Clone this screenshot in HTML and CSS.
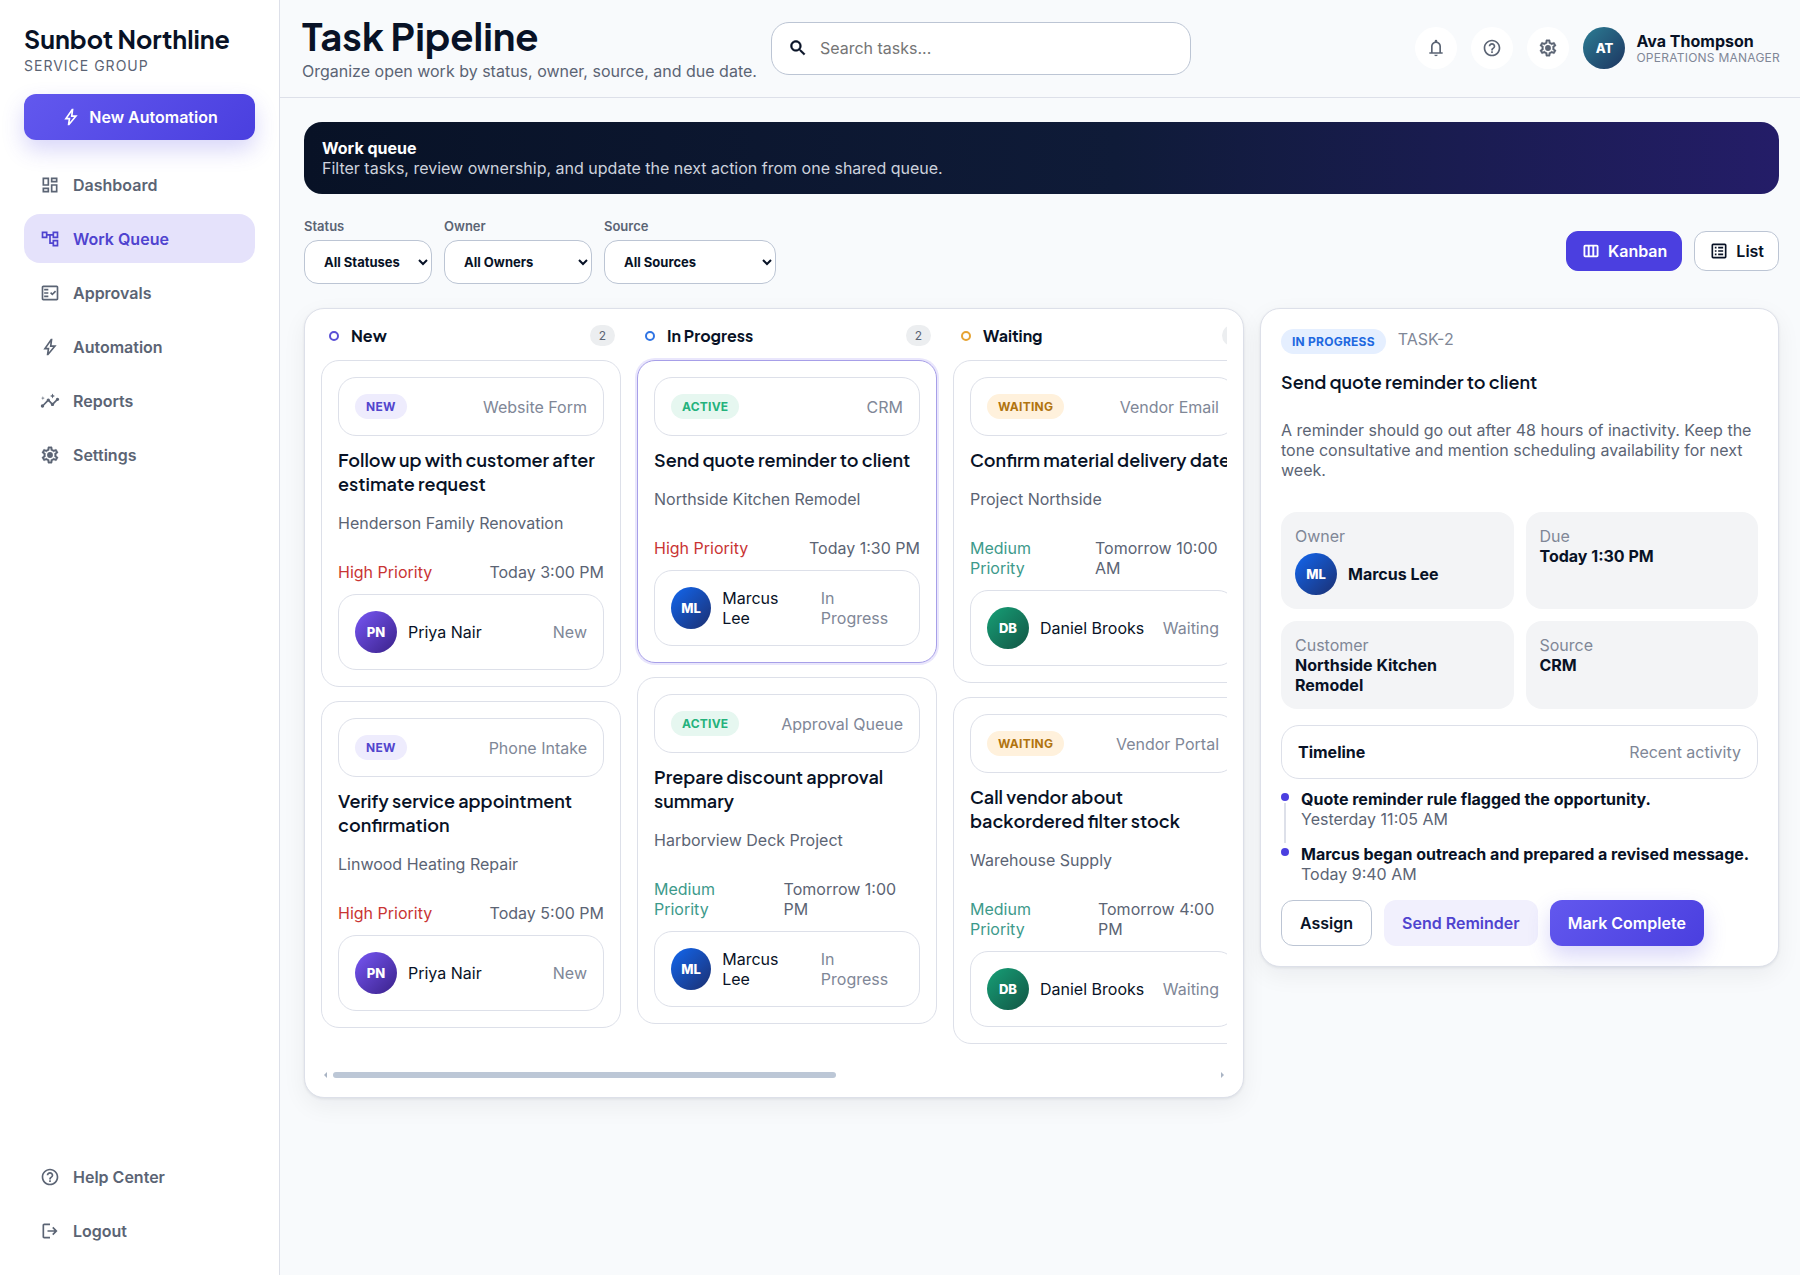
FILE: index.html
```html
<!DOCTYPE html>
<html lang="en">
<head>
    <meta charset="UTF-8">
    <meta name="viewport" content="width=device-width, initial-scale=1.0">
    <title>Task Pipeline - Sunbot Northline</title>
    <link rel="stylesheet" href="styles.css">
</head>
<body>
    <svg class="sprite" aria-hidden="true">
        <symbol id="i-bolt" viewBox="0 0 24 24"><path d="m10.55 18.2 5.175-6.2h-4l.725-5.675L7.825 13H11.3l-.75 5.2ZM8 22l1-7H4L13 2h2l-1 8h6L10 22H8Z"/></symbol>
        <symbol id="i-dashboard" viewBox="0 0 24 24"><path d="M19 5v2h-4V5h4M9 5v6H5V5h4m10 8v6h-4v-6h4M9 17v2H5v-2h4M21 3h-8v6h8V3zM11 3H3v10h8V3zm10 8h-8v10h8V11zm-10 4H3v6h8v-6z"/></symbol>
        <symbol id="i-tree" viewBox="0 0 24 24"><path d="M22 11V3h-7v3H9V3H2v8h7V8h2v10h4v3h7v-8h-7v3h-2V8h2v3h7zM7 9H4V5h3v4zm10 6h3v4h-3v-4zm0-10h3v4h-3V5z"/></symbol>
        <symbol id="i-check" viewBox="0 0 24 24"><path d="M20 3H4c-1.1 0-2 .9-2 2v14c0 1.1.9 2 2 2h16c1.1 0 2-.9 2-2V5c0-1.1-.9-2-2-2zm0 16H4V5h16v14z"/><path d="M19.41 10.42 17.99 9l-3.17 3.17-1.41-1.42L12 12.16 14.82 15zM5 7h5v2H5zm0 4h5v2H5zm0 4h5v2H5z"/></symbol>
        <symbol id="i-insights" viewBox="0 0 24 24"><path d="M21 8c-1.45 0-2.26 1.44-1.93 2.51l-3.55 3.56c-.3-.09-.74-.09-1.04 0l-2.55-2.55C12.27 10.45 11.46 9 10 9c-1.45 0-2.27 1.44-1.93 2.52l-4.56 4.55C2.44 15.74 1 16.55 1 18c0 1.1.9 2 2 2 1.45 0 2.26-1.44 1.93-2.51l4.55-4.56c.3.09.74.09 1.04 0l2.55 2.55C12.73 16.55 13.54 18 15 18c1.45 0 2.27-1.44 1.93-2.52l3.56-3.55c1.07.33 2.51-.48 2.51-1.93 0-1.1-.9-2-2-2z"/><path d="m15 9 .94-2.07L18 6l-2.06-.93L15 3l-.92 2.07L12 6l2.08.93zM3.5 11 4 9l2-.5L4 8l-.5-2L3 8l-2 .5L3 9z"/></symbol>
        <symbol id="i-settings" viewBox="0 0 24 24"><path stroke="currentColor" stroke-width=".4" d="M19.43 12.98c.04-.32.07-.64.07-.98 0-.34-.03-.66-.07-.98l2.11-1.65c.19-.15.24-.42.12-.64l-2-3.46c-.09-.16-.26-.25-.44-.25-.06 0-.12.01-.17.03l-2.49 1c-.52-.4-1.08-.73-1.69-.98l-.38-2.65C14.46 2.18 14.25 2 14 2h-4c-.25 0-.46.18-.49.42l-.38 2.65c-.61.25-1.17.59-1.69.98l-2.49-1c-.06-.02-.12-.03-.18-.03-.17 0-.34.09-.43.25l-2 3.46c-.13.22-.07.49.12.64l2.11 1.65c-.04.32-.07.65-.07.98 0 .33.03.66.07.98l-2.11 1.65c-.19.15-.24.42-.12.64l2 3.46c.09.16.26.25.44.25.06 0 .12-.01.17-.03l2.49-1c.52.4 1.08.73 1.69.98l.38 2.65c.03.24.24.42.49.42h4c.25 0 .46-.18.49-.42l.38-2.65c.61-.25 1.17-.59 1.69-.98l2.49 1c.06.02.12.03.18.03.17 0 .34-.09.43-.25l2-3.46c.12-.22.07-.49-.12-.64l-2.11-1.65zm-1.98-1.71c.04.31.05.52.05.73 0 .21-.02.43-.05.73l-.14 1.13.89.7 1.08.84-.7 1.21-1.27-.51-1.04-.42-.9.68c-.43.32-.84.56-1.25.73l-1.06.43-.16 1.13-.2 1.35h-1.4l-.19-1.35-.16-1.13-1.06-.43c-.43-.18-.83-.41-1.23-.71l-.91-.7-1.06.43-1.27.51-.7-1.21 1.08-.84.89-.7-.14-1.13c-.03-.31-.05-.54-.05-.74s.02-.43.05-.73l.14-1.13-.89-.7-1.08-.84.7-1.21 1.27.51 1.04.42.9-.68c.43-.32.84-.56 1.25-.73l1.06-.43.16-1.13.2-1.35h1.39l.19 1.35.16 1.13 1.06.43c.43.18.83.41 1.23.71l.91.7 1.06-.43 1.27-.51.7 1.21-1.07.85-.89.7.14 1.13z"/><circle cx="12" cy="12" r="3.5"/></symbol>
        <symbol id="i-help" viewBox="0 0 24 24"><path d="M11 18h2v-2h-2v2zm1-16C6.48 2 2 6.48 2 12s4.48 10 10 10 10-4.48 10-10S17.52 2 12 2zm0 18c-4.41 0-8-3.59-8-8s3.59-8 8-8 8 3.59 8 8-3.59 8-8 8zm0-14c-2.21 0-4 1.79-4 4h2c0-1.1.9-2 2-2s2 .9 2 2c0 2-3 1.75-3 5h2c0-2.25 3-2.5 3-5 0-2.21-1.79-4-4-4z"/></symbol>
        <symbol id="i-logout" viewBox="0 0 24 24"><path d="M5 21q-.825 0-1.412-.587T3 19V5q0-.825.588-1.412T5 3h7v2H5v14h7v2zm11-4-1.375-1.45 2.55-2.55H9v-2h8.175l-2.55-2.55L16 7l5 5z"/></symbol>
        <symbol id="i-bell" viewBox="0 0 24 24"><path d="M4 19v-2h2v-7q0-2.075 1.25-3.687T10.5 4.2v-.7q0-.625.438-1.062T12 2t1.063.438T13.5 3.5v.7q2 .5 3.25 2.113T18 10v7h2v2zm8 3q-.825 0-1.412-.587T10 20h4q0 .825-.587 1.413T12 22m-4-5h8v-7q0-1.65-1.175-2.825T12 6T9.175 7.175T8 10z"/></symbol>
        <symbol id="i-search" viewBox="0 0 24 24"><path stroke="currentColor" stroke-width=".6" d="M15.5 14h-.79l-.28-.27C15.41 12.59 16 11.11 16 9.5 16 5.91 13.09 3 9.5 3S3 5.91 3 9.5 5.91 16 9.5 16c1.61 0 3.09-.59 4.23-1.57l.27.28v.79l5 4.99L20.49 19l-4.99-5zm-6 0C7.01 14 5 11.99 5 9.5S7.01 5 9.5 5 14 7.01 14 9.5 11.99 14 9.5 14z"/></symbol>
        <symbol id="i-columns" viewBox="0 0 24 24"><path fill-rule="evenodd" d="M5 4.5h14a2 2 0 0 1 2 2v11a2 2 0 0 1-2 2H5a2 2 0 0 1-2-2v-11a2 2 0 0 1 2-2zm.2 2.2v10.6h2.9V6.700zm5.200 0v10.600h3.200V6.700zm5.500 0v10.600h2.900V6.700z"/></symbol>
        <symbol id="i-list" viewBox="0 0 24 24"><path fill-rule="evenodd" d="M5 3h14a2 2 0 0 1 2 2v14a2 2 0 0 1-2 2H5a2 2 0 0 1-2-2V5a2 2 0 0 1 2-2zm0 2v14h14V5zm2 2h2v2H7zm4 0h6v2h-6zm-4 4h2v2H7zm4 0h6v2h-6zm-4 4h2v2H7zm4 0h6v2h-6z"/></symbol>
    </svg>

    <div class="app">
        <aside class="sidebar">
            <div class="brand">
                <div class="brand-name">Sunbot Northline</div>
                <div class="brand-sub">SERVICE GROUP</div>
            </div>
            <button class="btn btn-primary" type="button"><svg class="icon"><use href="#i-bolt"/></svg>New Automation</button>
            <nav class="nav">
                <a class="nav-item" href="#"><svg class="icon"><use href="#i-dashboard"/></svg>Dashboard</a>
                <a class="nav-item active" href="#"><svg class="icon"><use href="#i-tree"/></svg>Work Queue</a>
                <a class="nav-item" href="#"><svg class="icon"><use href="#i-check"/></svg>Approvals</a>
                <a class="nav-item" href="#"><svg class="icon"><use href="#i-bolt"/></svg>Automation</a>
                <a class="nav-item" href="#"><svg class="icon"><use href="#i-insights"/></svg>Reports</a>
                <a class="nav-item" href="#"><svg class="icon"><use href="#i-settings"/></svg>Settings</a>
            </nav>
            <nav class="nav nav-bottom">
                <a class="nav-item" href="#"><svg class="icon"><use href="#i-help"/></svg>Help Center</a>
                <a class="nav-item" href="#"><svg class="icon"><use href="#i-logout"/></svg>Logout</a>
            </nav>
        </aside>

        <div class="main">
            <header class="topbar">
                <div class="page-head">
                    <h1>Task Pipeline</h1>
                    <p>Organize open work by status, owner, source, and due date.</p>
                </div>
                <label class="search">
                    <svg class="icon"><use href="#i-search"/></svg>
                    <input type="search" placeholder="Search tasks..." aria-label="Search tasks">
                </label>
                <div class="top-actions">
                    <button class="icon-btn" type="button" aria-label="Notifications"><svg class="icon"><use href="#i-bell"/></svg></button>
                    <button class="icon-btn" type="button" aria-label="Help"><svg class="icon"><use href="#i-help"/></svg></button>
                    <button class="icon-btn" type="button" aria-label="Settings"><svg class="icon"><use href="#i-settings"/></svg></button>
                    <div class="person">
                        <span class="avatar avatar-at">AT</span>
                        <div class="user">
                            <strong>Ava Thompson</strong>
                            <span>OPERATIONS MANAGER</span>
                        </div>
                    </div>
                </div>
            </header>

            <main class="content">
                <section class="banner">
                    <strong>Work queue</strong>
                    <p>Filter tasks, review ownership, and update the next action from one shared queue.</p>
                </section>

                <div class="toolbar">
                    <div class="filters">
                        <div class="field field-status">
                            <label for="f-status">Status</label>
                            <select id="f-status"><option>All Statuses</option></select>
                        </div>
                        <div class="field field-owner">
                            <label for="f-owner">Owner</label>
                            <select id="f-owner"><option>All Owners</option></select>
                        </div>
                        <div class="field field-source">
                            <label for="f-source">Source</label>
                            <select id="f-source"><option>All Sources</option></select>
                        </div>
                    </div>
                    <div class="views">
                        <button class="view-btn active" type="button"><svg class="icon"><use href="#i-columns"/></svg>Kanban</button>
                        <button class="view-btn" type="button"><svg class="icon"><use href="#i-list"/></svg>List</button>
                    </div>
                </div>

                <div class="workspace">
                    <section class="panel board">
                        <div class="columns">
                            <div class="column">
                                <div class="column-head"><span class="ring ring-new"></span><h2>New</h2><span class="count">2</span></div>
                                <article class="card">
                                    <div class="box"><span class="badge badge-new">NEW</span><span class="muted">Website Form</span></div>
                                    <h3>Follow up with customer after estimate request</h3>
                                    <p>Henderson Family Renovation</p>
                                    <div class="meta"><span class="high">High Priority</span><span>Today 3:00 PM</span></div>
                                    <div class="box"><div class="person"><span class="avatar avatar-pn">PN</span><span>Priya Nair</span></div><span class="muted">New</span></div>
                                </article>
                                <article class="card">
                                    <div class="box"><span class="badge badge-new">NEW</span><span class="muted">Phone Intake</span></div>
                                    <h3>Verify service appointment confirmation</h3>
                                    <p>Linwood Heating Repair</p>
                                    <div class="meta"><span class="high">High Priority</span><span>Today 5:00 PM</span></div>
                                    <div class="box"><div class="person"><span class="avatar avatar-pn">PN</span><span>Priya Nair</span></div><span class="muted">New</span></div>
                                </article>
                            </div>

                            <div class="column">
                                <div class="column-head"><span class="ring ring-progress"></span><h2>In Progress</h2><span class="count">2</span></div>
                                <article class="card selected">
                                    <div class="box"><span class="badge badge-active">ACTIVE</span><span class="muted">CRM</span></div>
                                    <h3>Send quote reminder to client</h3>
                                    <p>Northside Kitchen Remodel</p>
                                    <div class="meta"><span class="high">High Priority</span><span>Today 1:30 PM</span></div>
                                    <div class="box"><div class="person"><span class="avatar avatar-ml">ML</span><span>Marcus Lee</span></div><span class="muted">In Progress</span></div>
                                </article>
                                <article class="card">
                                    <div class="box"><span class="badge badge-active">ACTIVE</span><span class="muted">Approval Queue</span></div>
                                    <h3>Prepare discount approval summary</h3>
                                    <p>Harborview Deck Project</p>
                                    <div class="meta"><span class="medium">Medium Priority</span><span>Tomorrow 1:00 PM</span></div>
                                    <div class="box"><div class="person"><span class="avatar avatar-ml">ML</span><span>Marcus Lee</span></div><span class="muted">In Progress</span></div>
                                </article>
                            </div>

                            <div class="column">
                                <div class="column-head"><span class="ring ring-waiting"></span><h2>Waiting</h2><span class="count">2</span></div>
                                <article class="card">
                                    <div class="box"><span class="badge badge-waiting">WAITING</span><span class="muted">Vendor Email</span></div>
                                    <h3>Confirm material delivery date</h3>
                                    <p>Project Northside</p>
                                    <div class="meta"><span class="medium">Medium Priority</span><span>Tomorrow 10:00 AM</span></div>
                                    <div class="box"><div class="person"><span class="avatar avatar-db">DB</span><span>Daniel Brooks</span></div><span class="muted">Waiting</span></div>
                                </article>
                                <article class="card">
                                    <div class="box"><span class="badge badge-waiting">WAITING</span><span class="muted">Vendor Portal</span></div>
                                    <h3>Call vendor about backordered filter stock</h3>
                                    <p>Warehouse Supply</p>
                                    <div class="meta"><span class="medium">Medium Priority</span><span>Tomorrow 4:00 PM</span></div>
                                    <div class="box"><div class="person"><span class="avatar avatar-db">DB</span><span>Daniel Brooks</span></div><span class="muted">Waiting</span></div>
                                </article>
                            </div>
                        </div>
                        <div class="scrollbar" aria-hidden="true">
                            <span class="arrow arrow-left"></span>
                            <div class="track"><div class="thumb"></div></div>
                            <span class="arrow arrow-right"></span>
                        </div>
                    </section>

                    <section class="panel detail">
                        <div class="detail-top"><span class="badge badge-progress">IN PROGRESS</span><span class="muted">TASK-2</span></div>
                        <h3>Send quote reminder to client</h3>
                        <p class="detail-text">A reminder should go out after 48 hours of inactivity. Keep the tone consultative and mention scheduling availability for next week.</p>
                        <div class="facts">
                            <div class="fact">
                                <span class="muted">Owner</span>
                                <div class="person"><span class="avatar avatar-ml">ML</span><strong>Marcus Lee</strong></div>
                            </div>
                            <div class="fact"><span class="muted">Due</span><strong>Today 1:30 PM</strong></div>
                            <div class="fact"><span class="muted">Customer</span><strong>Northside Kitchen Remodel</strong></div>
                            <div class="fact"><span class="muted">Source</span><strong>CRM</strong></div>
                        </div>
                        <div class="box"><strong>Timeline</strong><span class="muted">Recent activity</span></div>
                        <ul class="timeline">
                            <li><span class="dot"></span><div><strong>Quote reminder rule flagged the opportunity.</strong><span>Yesterday 11:05 AM</span></div></li>
                            <li><span class="dot"></span><div><strong>Marcus began outreach and prepared a revised message.</strong><span>Today 9:40 AM</span></div></li>
                        </ul>
                        <div class="detail-actions">
                            <button class="btn btn-outline" type="button">Assign</button>
                            <button class="btn btn-soft" type="button">Send Reminder</button>
                            <button class="btn btn-primary" type="button">Mark Complete</button>
                        </div>
                    </section>
                </div>
            </main>
        </div>
    </div>
</body>
</html>
```
FILE: styles.css
```css
:root {
    --ink: #081226;
    --text: #5b6474;
    --muted: #808797;
    --line: #dde0e9;
    --line-strong: #bcc5d4;
    --primary: #4b3fe0;
    --heading: "Plus Jakarta Sans", Inter, sans-serif;
}
* {
    box-sizing: border-box;
}
body {
    margin: 0;
    font-family: Inter, sans-serif;
    font-size: 16px;
    line-height: 20px;
    color: var(--ink);
    background: #f8fafc;
}
h1, h2, h3, p, ul {
    margin: 0;
    padding: 0;
}
button, input, select {
    font: inherit;
    color: inherit;
}
strong {
    font-weight: 700;
}
.sprite {
    display: none;
}
.icon {
    width: 20px;
    height: 20px;
    fill: currentColor;
    flex-shrink: 0;
}
.muted {
    color: var(--muted);
}
.app {
    display: flex;
    min-height: 100vh;
}

/* Sidebar */
.sidebar {
    display: flex;
    flex-direction: column;
    width: 280px;
    flex-shrink: 0;
    padding: 24px 24px 20px;
    background: #fff;
    border-right: 1px solid var(--line);
}
.brand {
    margin-bottom: 18px;
}
.brand-name {
    margin-bottom: 2px;
    font-family: var(--heading);
    font-size: 25px;
    line-height: 30px;
    font-weight: 700;
}
.brand-sub {
    font-size: 14px;
    letter-spacing: 1px;
    color: var(--text);
}
.nav {
    display: flex;
    flex-direction: column;
    gap: 5px;
    margin-top: 20px;
}
.nav-bottom {
    margin-top: auto;
}
.nav-item {
    display: flex;
    align-items: center;
    gap: 13px;
    height: 49px;
    padding: 0 16px;
    border-radius: 16px;
    font-weight: 600;
    color: var(--text);
    text-decoration: none;
}
.nav-item.active {
    background: #e5e2fb;
    color: #4f43cf;
}

/* Buttons */
.btn {
    display: flex;
    align-items: center;
    justify-content: center;
    gap: 8px;
    height: 46px;
    padding: 0 18px;
    border: 0;
    border-radius: 12px;
    font-weight: 600;
    cursor: pointer;
}
.btn-primary {
    color: #fff;
    background: linear-gradient(135deg, #6258ee, #4a3fdf);
    box-shadow: 0 10px 22px rgba(79, 67, 226, 0.22);
}
.btn-outline {
    background: #fff;
    border: 1px solid var(--line-strong);
}
.btn-soft {
    background: #f1f0fd;
    color: #4f43cf;
}

/* Topbar */
.main {
    flex: 1;
    min-width: 0;
}
.topbar {
    display: flex;
    align-items: center;
    gap: 14px;
    height: 98px;
    padding: 0 20px 1px 22px;
    border-bottom: 1px solid var(--line);
}
.page-head h1 {
    margin-bottom: 4px;
    font-family: var(--heading);
    font-size: 38px;
    line-height: 42px;
    font-weight: 700;
}
.page-head p {
    white-space: nowrap;
    color: var(--text);
}
.search {
    display: flex;
    align-items: center;
    gap: 12px;
    width: 420px;
    height: 53px;
    padding: 0 16px;
    background: #fff;
    border: 1px solid var(--line-strong);
    border-radius: 18px;
}
.search input {
    flex: 1;
    min-width: 0;
    padding: 0;
    border: 0;
    outline: 0;
    background: none;
}
.top-actions {
    display: flex;
    align-items: center;
    gap: 14px;
    margin-left: auto;
}
.icon-btn {
    display: grid;
    place-items: center;
    width: 42px;
    height: 42px;
    padding: 0;
    border: 0;
    border-radius: 50%;
    background: #fff;
    color: var(--text);
}
.person {
    display: flex;
    align-items: center;
    gap: 11px;
}
.user strong, .user span {
    display: block;
}
.user span {
    font-size: 12px;
    line-height: 14px;
    letter-spacing: 0.02em;
    color: var(--muted);
}
.avatar {
    display: grid;
    place-items: center;
    width: 42px;
    height: 42px;
    border-radius: 50%;
    font-size: 13px;
    font-weight: 800;
    color: #fff;
}
.avatar-at { background: linear-gradient(135deg, #2c7d94, #1d3560); }
.avatar-pn { background: linear-gradient(135deg, #7757f5, #3a2189); }
.avatar-ml { background: linear-gradient(135deg, #1267f0, #1c2f70); }
.avatar-db { background: linear-gradient(135deg, #16a077, #135544); }

/* Content */
.content {
    display: flex;
    flex-direction: column;
    gap: 24px;
    padding: 24px 21px 24px 24px;
}
.banner {
    padding: 16px 18px;
    border-radius: 18px;
    color: #fff;
    background: linear-gradient(90deg, #081226, #0f1b38 55%, #241d68);
}
.banner p {
    color: #cdd2dd;
}
.toolbar, .filters, .views {
    display: flex;
    align-items: center;
    gap: 12px;
}
.toolbar {
    justify-content: space-between;
}
.field {
    display: flex;
    flex-direction: column;
    gap: 6px;
}
.field label {
    font-size: 13px;
    line-height: 16px;
    font-weight: 600;
    color: var(--text);
}
.field select {
    height: 44px;
    padding: 0 0 0 15px;
    border: 1px solid var(--line-strong);
    border-radius: 14px;
    background: #fff;
    font-size: 13px;
    font-weight: 700;
}
.field-status { width: 128px; }
.field-owner { width: 148px; }
.field-source { width: 172px; }
.view-btn {
    display: flex;
    align-items: center;
    gap: 7px;
    height: 40px;
    padding: 0 14px;
    border: 1px solid var(--line-strong);
    border-radius: 12px;
    background: #fff;
    font-weight: 600;
}
.view-btn.active {
    border-color: var(--primary);
    background: var(--primary);
    color: #fff;
}
.workspace {
    display: grid;
    grid-template-columns: minmax(0, 1fr) 519px;
    gap: 16px;
    align-items: start;
}
.panel {
    background: #fff;
    border: 1px solid var(--line);
    border-radius: 20px;
    box-shadow: 0 8px 24px rgba(15, 23, 42, 0.06), 0 1px 3px rgba(15, 23, 42, 0.08);
}

/* Board */
.board {
    padding: 16px;
}
.columns {
    display: flex;
    align-items: flex-start;
    gap: 16px;
    overflow-x: auto;
    padding-bottom: 24px;
    scrollbar-width: none;
}
.scrollbar {
    display: flex;
    align-items: center;
    gap: 6px;
    height: 13px;
    padding: 0 3px;
}
.track {
    flex: 1;
}
.thumb {
    width: 57%;
    height: 6px;
    border-radius: 3px;
    background: #bcc7d6;
}
.arrow {
    border: 3px solid transparent;
}
.arrow-left {
    border-left: 0;
    border-right-color: #a9b4c4;
}
.arrow-right {
    border-right: 0;
    border-left-color: #a9b4c4;
}
.column {
    display: flex;
    flex-direction: column;
    gap: 14px;
    flex: 0 0 300px;
}
.column-head {
    display: flex;
    align-items: center;
    gap: 12px;
    height: 21px;
    padding: 0 6px 0 8px;
}
.column-head h2 {
    font-family: var(--heading);
    font-size: 16px;
    font-weight: 700;
}
.ring {
    width: 10px;
    height: 10px;
    border: 2px solid;
    border-radius: 50%;
}
.ring-new { color: #5a4fd6; }
.ring-progress { color: #2f74e4; }
.ring-waiting { color: #e6a332; }
.count {
    margin-left: auto;
    width: 25px;
    border-radius: 12px;
    background: #eceef0;
    color: var(--text);
    font-size: 12px;
    line-height: 21px;
    text-align: center;
}
.card {
    display: flex;
    flex-direction: column;
    gap: 12px;
    padding: 16px;
    border: 1px solid var(--line);
    border-radius: 18px;
    background: #fff;
}
.card.selected {
    border-color: #a79fe8;
    box-shadow: 0 0 0 2px #e9e6fc;
}
.card p {
    margin: 4px 0 16px;
    line-height: 22px;
    color: var(--text);
}
h3 {
    font-family: var(--heading);
    font-size: 18px;
    line-height: 24px;
    font-weight: 600;
}
.box {
    display: flex;
    align-items: center;
    justify-content: space-between;
    gap: 14px;
    padding: 16px;
    border: 1px solid var(--line);
    border-radius: 18px;
}
.badge {
    padding: 0 11px;
    border-radius: 13px;
    font-size: 12px;
    line-height: 25px;
    font-weight: 700;
    letter-spacing: 0.02em;
}
.badge-new { background: #eeecfd; color: #5145cd; }
.badge-active { background: #e6f7f0; color: #24b27c; }
.badge-waiting { background: #fff1dc; color: #b1740f; }
.badge-progress { background: #e5efff; color: #2068e0; }
.meta {
    display: flex;
    justify-content: space-between;
    gap: 14px;
    color: var(--text);
}
.high { color: #c93434; }
.medium { color: #3d9a8b; }

/* Detail */
.detail {
    display: flex;
    flex-direction: column;
    gap: 16px;
    padding: 20px;
}
.detail-top {
    display: flex;
    gap: 12px;
}
.detail-text {
    margin: 10px 0 16px;
    color: var(--text);
}
.facts {
    display: grid;
    grid-template-columns: 1fr 1fr;
    gap: 12px;
}
.fact {
    padding: 14px;
    border-radius: 16px;
    background: #f3f4f6;
}
.fact > .muted, .fact > strong {
    display: block;
}
.fact .person {
    margin-top: 7px;
}
.timeline {
    display: flex;
    flex-direction: column;
    gap: 15px;
    margin-top: -6px;
    list-style: none;
}
.timeline li {
    display: flex;
    gap: 12px;
}
.timeline strong, .timeline div span {
    display: block;
}
.timeline div span {
    color: var(--text);
}
.dot {
    position: relative;
    width: 8px;
    height: 8px;
    margin-top: 4px;
    border-radius: 50%;
    background: var(--primary);
}
.timeline li:not(:last-child) .dot::after {
    content: "";
    position: absolute;
    top: 10px;
    left: 3px;
    width: 2px;
    height: 40px;
    background: var(--line);
}
.detail-actions {
    display: flex;
    gap: 12px;
}
```
